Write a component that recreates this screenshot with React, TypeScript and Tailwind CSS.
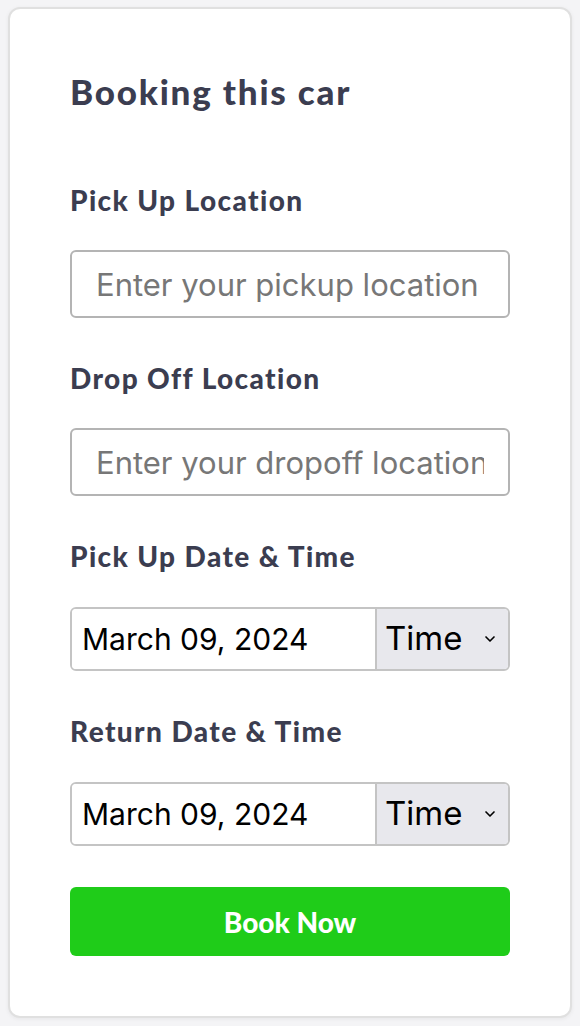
import { ChevronDown } from "lucide-react";

const labelClass = "block text-[28px] leading-[32px] font-black text-[#3b3d50] tracking-[1.4px]";
const inputClass =
  "w-full h-[68px] rounded-[6px] border-2 border-[#b4b4b4] bg-white px-[24px] text-[31px] text-[#333] placeholder:text-[#777] outline-none";

function DateTime({ date }: { date: string }) {
  return (
    <div className="flex h-[64px] w-full overflow-hidden rounded-[6px] border-2 border-[#c4c4c4]">
      <div className="flex flex-1 items-center bg-white pl-[10px] text-[30px] text-black" style={{ fontFamily: "Inter, sans-serif" }}>
        {date}
      </div>
      <div className="flex w-[133px] items-center justify-between border-l-2 border-[#c4c4c4] bg-[#e8e8ed] pl-[8px] pr-[10px] text-[33px] text-black" style={{ fontFamily: "Inter, sans-serif" }}>
        <span>Time</span>
        <ChevronDown size={16} strokeWidth={2.5} />
      </div>
    </div>
  );
}

export default function App() {
  return (
    <div className="min-h-[1026px] bg-[#f4f4f6] pt-[7px] px-[8px] pb-[8px]" style={{ fontFamily: "Lato, sans-serif" }}>
      <div className="rounded-[12px] border-2 border-[#e0e0e0] bg-white px-[60px] pt-[62px] pb-[60px] shadow-[0_1px_4px_rgba(0,0,0,0.06)]">
        <h2 className="text-[35px] leading-[41px] font-black text-[#3b3d50] tracking-[1.8px]">Booking this car</h2>

        <div className="mt-[72px]">
          <label className={labelClass}>Pick Up Location</label>
          <input className={inputClass + " mt-[34px]"} placeholder="Enter your pickup location" style={{ fontFamily: "Inter, sans-serif" }} />
        </div>

        <div className="mt-[44px]">
          <label className={labelClass}>Drop Off Location</label>
          <input className={inputClass + " mt-[34px]"} placeholder="Enter your dropoff location" style={{ fontFamily: "Inter, sans-serif" }} />
        </div>

        <div className="mt-[44px]">
          <label className={labelClass}>Pick Up Date &amp; Time</label>
          <div className="mt-[35px]">
            <DateTime date="March 09, 2024" />
          </div>
        </div>

        <div className="mt-[44px]">
          <label className={labelClass}>Return Date &amp; Time</label>
          <div className="mt-[35px]">
            <DateTime date="March 09, 2024" />
          </div>
        </div>

        <button className="mt-[41px] flex h-[69px] w-full items-center justify-center rounded-[6px] bg-[#1fcc19] text-[28px] font-black text-white">
          Book Now
        </button>
      </div>
    </div>
  );
}
